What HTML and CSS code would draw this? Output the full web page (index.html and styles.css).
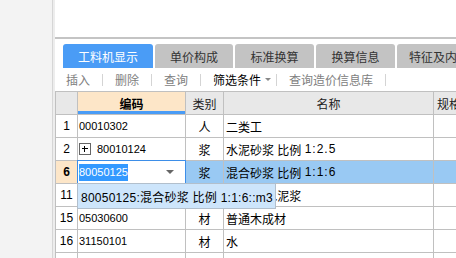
FILE: index.html
```html
<!DOCTYPE html>
<html lang="zh">
<head>
<meta charset="utf-8">
<link rel="stylesheet" href="styles.css">
</head>
<body>
<div class="app">
  <aside class="side"></aside>
  <main class="main">
    <div class="top"></div>
    <div class="tabs">
      <div class="tab active w1">工料机显示</div>
      <div class="tab w2">单价构成</div>
      <div class="tab w3">标准换算</div>
      <div class="tab w4">换算信息</div>
      <div class="tab w5">特征及内容</div>
    </div>
    <div class="toolbar">
      <span class="tool first">插入</span><i class="sep"></i>
      <span class="tool">删除</span><i class="sep"></i>
      <span class="tool">查询</span><i class="sep"></i>
      <span class="tool filter">筛选条件<i class="tri-s"></i></span><i class="sep"></i>
      <span class="tool">查询造价信息库</span><i class="sep"></i>
    </div>
    <div class="grid-wrap">
      <div class="grid">
        <div class="c hd"></div>
        <div class="c hd code">编码</div>
        <div class="c hd">类别</div>
        <div class="c hd">名称</div>
        <div class="c hd spec">规格型号</div>

        <div class="c rn">1</div>
        <div class="c num">00010302</div>
        <div class="c ctr">人</div>
        <div class="c">二类工</div>
        <div class="c"></div>

        <div class="c rn">2</div>
        <div class="c num"><span class="plus"></span>80010124</div>
        <div class="c ctr">浆</div>
        <div class="c">水泥砂浆 比例 <span class="ratio">1:2.5</span></div>
        <div class="c"></div>

        <div class="c rn sel-n">6</div>
        <div class="c num edit"><span class="hl">80050125</span><i class="caret"></i></div>
        <div class="c ctr sel">浆</div>
        <div class="c sel">混合砂浆 比例 <span class="ratio">1:1:6</span></div>
        <div class="c sel"></div>

        <div class="c rn">11</div>
        <div class="c num">80110301</div>
        <div class="c ctr">浆</div>
        <div class="c">白水泥 水泥浆</div>
        <div class="c"></div>

        <div class="c rn">15</div>
        <div class="c num">05030600</div>
        <div class="c ctr">材</div>
        <div class="c">普通木成材</div>
        <div class="c"></div>

        <div class="c rn">16</div>
        <div class="c num">31150101</div>
        <div class="c ctr">材</div>
        <div class="c">水</div>
        <div class="c"></div>

        <div class="c rn"></div>
        <div class="c num"><span class="plus"></span>80010123</div>
        <div class="c ctr">浆</div>
        <div class="c">水泥砂浆 比例 1:3</div>
        <div class="c">M5.0</div>
      </div>
      <div class="popup">80050125:混合砂浆 比例 1:1:6::m3</div>
    </div>
  </main>
</div>
</body>
</html>
```
FILE: styles.css
```css
* { box-sizing: border-box; }
html, body {
  margin: 0;
  width: 456px;
  height: 258px;
  overflow: hidden;
  background: #fff;
  font-family: "Liberation Sans", "Noto Sans CJK SC", sans-serif;
  font-size: 12px;
  color: #000;
}
.app { display: flex; height: 258px; }
.side {
  flex: none;
  width: 53px;
  background: #f3f3f3;
  border-right: 1px solid #d6d6d6;
}
.main {
  flex: 1;
  min-width: 0;
  overflow: hidden;
  border-left: 2px solid #ededed;
}
.top {
  height: 39px;
  border-bottom: 2px solid #c4c4c4;
}
.tabs {
  display: flex;
  gap: 2px;
  padding: 5px 0 0 8px;
  height: 29px;
  overflow: hidden;
}
.tab {
  flex: none;
  height: 24px;
  display: flex;
  align-items: center;
  justify-content: center;
  background: #c3c3c3;
  color: #333;
  border-radius: 3px 3px 0 0;
  white-space: nowrap;
  overflow: hidden;
}
.tab.active { background: #4a9cf6; color: #fff; }
.w1 { width: 90px; }
.w2 { width: 78px; }
.w3 { width: 79px; }
.w4 { width: 79px; }
.w5 { width: 90px; justify-content: flex-start; padding-left: 12px; }

.toolbar {
  height: 23px;
  display: flex;
  align-items: center;
  padding-left: 11px;
  color: #808080;
  white-space: nowrap;
}
.tool { padding: 0 12px; }
.tool.first { padding-left: 0; }
.tool.filter {
  color: #000;
  padding-right: 5px;
  display: flex;
  align-items: center;
}
.tri-s {
  width: 0; height: 0;
  margin-left: 4px;
  border-left: 3px solid transparent;
  border-right: 3px solid transparent;
  border-top: 3px solid #888;
}
.sep { width: 1px; height: 12px; background: #d4d4d4; flex: none; }

.grid-wrap { position: relative; }
.grid {
  display: grid;
  grid-template-columns: 21px 107px 37px 209px 80px;
  grid-auto-rows: 22px;
  gap: 1px;
  width: max-content;
  background: #c0c0c0;
  border: 1px solid #c0c0c0;
}
.c {
  background: #fff;
  display: flex;
  align-items: center;
  padding: 0 2px;
  white-space: pre;
  overflow: hidden;
}
.hd { background: #e8e8e8; justify-content: center; color: #222; }
.hd.code {
  background: #fde6c8;
  font-weight: bold;
  color: #000;
  box-shadow: inset 0 -3px #4a9cf6;
}
.hd.spec { justify-content: flex-start; padding-left: 3px; }
.rn { justify-content: center; padding: 0; }
.ctr { justify-content: center; }
.num { font-size: 11px; padding-left: 1px; }
.ratio { letter-spacing: 1px; }
.sel-n { background: #fde6c8; font-weight: bold; }
.sel { background: #99c9f3; }
.edit {
  outline: 1px solid #3d8ee8;
  position: relative;
  z-index: 1;
  justify-content: space-between;
}
.hl { background: #3399ff; color: #fff; line-height: 17px; }
.caret {
  width: 0; height: 0;
  margin-right: 9px;
  border-left: 4px solid transparent;
  border-right: 4px solid transparent;
  border-top: 4px solid #666;
}
.plus {
  position: relative;
  flex: none;
  width: 12px;
  height: 12px;
  margin: 0 6px 0 0;
  border: 1px solid #666;
  background: #fff;
}
.plus::before, .plus::after {
  content: "";
  position: absolute;
  background: #000;
}
.plus::before { left: 2px; right: 2px; top: 4px; height: 1px; }
.plus::after { top: 2px; bottom: 2px; left: 4px; width: 1px; }

.popup {
  position: absolute;
  left: 22px;
  top: 92px;
  width: 199px;
  height: 26px;
  z-index: 2;
  display: flex;
  align-items: center;
  padding-left: 3px;
  letter-spacing: 0.25px;
  background: #cde5fb;
  border: 1px solid #b2bfcc;
  white-space: pre;
  overflow: hidden;
}
```
